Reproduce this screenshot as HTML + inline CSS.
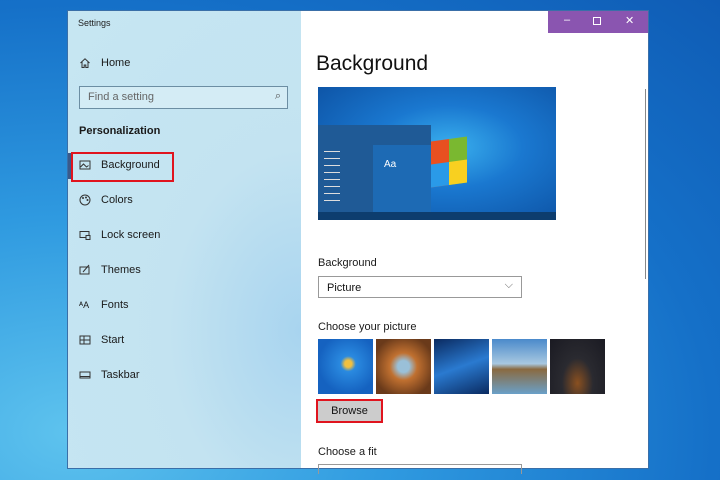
<!DOCTYPE html>
<html><head><style>
*{margin:0;padding:0;box-sizing:border-box}
body{width:720px;height:480px;overflow:hidden;position:relative;font-family:"Liberation Sans",sans-serif;
background:radial-gradient(ellipse at 10% 90%,#5ec3ee 0%,#2f9ae0 35%,#1570c8 70%,#0f5cb5 100%);}
.win{position:absolute;left:67px;top:10px;width:582px;height:459px;background:#fff;border:1px solid #3a6fa8;}
.side{position:absolute;left:0;top:0;width:233px;height:100%;
background:radial-gradient(ellipse at 100% 70%,#a8d4ef 0%,#c3e3f1 40%,#c6e6f2 100%),#c2e2f0;}
.side .t{position:absolute;left:10px;top:7px;font-size:9px;color:#222}
.item{position:absolute;left:11px;font-size:11px;color:#1a1a1a;display:flex;align-items:center}
.item svg{width:12px;height:12px;margin-right:10px}
.search{position:absolute;left:11px;top:75px;width:209px;height:23px;border:1px solid #6c8ea3;background:#d4ecf5;font-size:11px;color:#666;padding:4px 8px}
.main{position:absolute;left:233px;top:0;right:0;height:100%}
.red{position:absolute;border:2px solid #e0141e}
.tb{position:absolute;right:0;top:0;width:100px;height:22px;background:#8a55b0;color:#fff;font-size:11px}
.lbl{position:absolute;font-size:11px;color:#1a1a1a}
.th{position:absolute;top:328px;width:55px;height:55px}
</style></head><body>
<div class="win">
 <div class="side">
  <div class="t">Settings</div>
  <div class="item" style="top:46px"><svg viewBox="0 0 12 12"><path d="M1.5 6L6 1.8 10.5 6M3 5v5.5h2.2V8h1.6v2.5H9V5" fill="none" stroke="#333" stroke-width="1"/></svg>Home</div>
  <div class="search">Find a setting<span style="position:absolute;right:6px;top:3px;color:#555">⌕</span></div>
  <div style="position:absolute;left:11px;top:114px;font-size:11px;font-weight:bold;color:#1a1a1a">Personalization</div>
  <div style="position:absolute;left:0;top:142px;width:3px;height:26px;background:#3a5a8a"></div>
  <div class="item" style="top:148px"><svg viewBox="0 0 12 12"><rect x="1" y="2" width="10" height="8" fill="none" stroke="#333"/><path d="M1.5 8l3-3 3 3 2-1.5" fill="none" stroke="#333"/></svg>Background</div>
  <div class="item" style="top:183px"><svg viewBox="0 0 12 12"><circle cx="6" cy="6" r="5" fill="none" stroke="#333"/><circle cx="4" cy="4" r="1" fill="#333"/><circle cx="7" cy="3.5" r="1" fill="#333"/><circle cx="8.5" cy="6" r="1" fill="#333"/></svg>Colors</div>
  <div class="item" style="top:218px"><svg viewBox="0 0 12 12"><rect x="1" y="2.5" width="9" height="6" fill="none" stroke="#333"/><rect x="7" y="6.5" width="4" height="4" fill="#c2e2f0" stroke="#333"/></svg>Lock screen</div>
  <div class="item" style="top:253px"><svg viewBox="0 0 12 12"><rect x="1" y="3" width="9" height="7" fill="none" stroke="#333"/><path d="M4 8l6-7" stroke="#333"/></svg>Themes</div>
  <div class="item" style="top:288px"><span style="width:12px;margin-right:10px;font-size:9px">ᴬA</span>Fonts</div>
  <div class="item" style="top:323px"><svg viewBox="0 0 12 12"><rect x="1" y="2" width="10" height="8" fill="none" stroke="#333"/><path d="M1 6h10M5 2v8" stroke="#333"/></svg>Start</div>
  <div class="item" style="top:358px"><svg viewBox="0 0 12 12"><rect x="1" y="3" width="10" height="6" fill="none" stroke="#333"/><path d="M1 7.5h10" stroke="#333"/></svg>Taskbar</div>
 </div>
 <div class="red" style="left:3px;top:141px;width:103px;height:30px"></div>
 <div class="main">
  <div class="tb"><span style="position:absolute;left:16px;top:3px">–</span><span style="position:absolute;left:45px;top:6px;width:8px;height:8px;border:1px solid #fff"></span><span style="position:absolute;left:77px;top:3px">✕</span></div>
  <div style="position:absolute;left:15px;top:41px;font-size:21px;color:#111">Background</div>
  <div style="position:absolute;left:17px;top:76px;width:238px;height:133px;overflow:hidden;background:radial-gradient(ellipse at 55% 45%,#3ab0ee 0%,#1a78d0 40%,#0c4fa0 100%)">
   <div style="position:absolute;left:113px;top:52px;width:36px;height:46px;transform:skewY(-8deg);background:linear-gradient(90deg,#e85020 0 50%,#7ab830 50%);"></div>
   <div style="position:absolute;left:113px;top:75px;width:36px;height:23px;transform:skewY(-8deg);background:linear-gradient(90deg,#2a9ae8 0 50%,#f8d020 50%);"></div>
   <div style="position:absolute;left:0;top:38px;width:113px;height:87px;background:#1f5a96"></div>
   <div style="position:absolute;left:55px;top:58px;width:58px;height:67px;background:#1d6ab4;color:#fff;font-size:10px;padding:14px 0 0 11px">Aa</div>
   <div style="position:absolute;left:6px;top:58px;width:16px;height:60px;background:repeating-linear-gradient(#1f5a96 0 6px,#ddd 6px 7px)"></div>
   <div style="position:absolute;left:0;top:125px;width:238px;height:8px;background:#0d3d6e"></div>
  </div>
  <div style="position:absolute;top:78px;height:190px;right:2px;width:1px;background:#888"></div>
  <div class="lbl" style="left:17px;top:246px">Background</div>
  <div style="position:absolute;left:17px;top:265px;width:204px;height:22px;border:1px solid #999;font-size:11px;padding:5px 8px;color:#111">Picture<span style="position:absolute;right:8px;top:2px;color:#666">⌵</span></div>
  <div class="lbl" style="left:17px;top:310px">Choose your picture</div>
  <div class="th" style="left:17px;background:radial-gradient(circle at 55% 45%,#f0c040 0 8%,#2a8ae0 18%,#1562c0 70%)"></div>
  <div class="th" style="left:75px;background:radial-gradient(circle at 50% 50%,#9ac0d8 0 15%,#c07030 35%,#6a3a1a 80%)"></div>
  <div class="th" style="left:133px;background:linear-gradient(160deg,#0a2a60,#2a7ad0 50%,#0a2a60)"></div>
  <div class="th" style="left:191px;background:linear-gradient(#4a8acb,#a8c8e0 45%,#8a6a40 55%,#6aa0c8)"></div>
  <div class="th" style="left:249px;background:radial-gradient(ellipse at 50% 80%,#8a5020 0%,#2a2a30 40%,#1a1a22)"></div>
  <div style="position:absolute;left:15px;top:388px;width:67px;height:24px;background:#ccc;font-size:11px;text-align:center;line-height:20px;color:#111;border:2px solid #e0141e">Browse</div>
  <div class="lbl" style="left:17px;top:435px">Choose a fit</div>
  <div style="position:absolute;left:17px;top:453px;width:204px;height:10px;border:1px solid #999;border-bottom:none"></div>
 </div>
</div>
</body></html>
